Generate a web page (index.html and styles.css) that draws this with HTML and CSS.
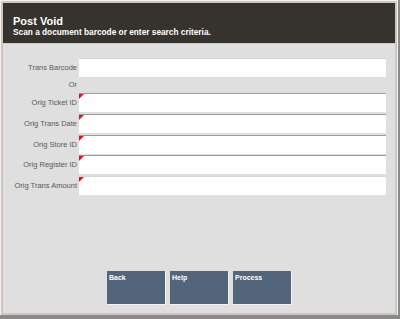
FILE: index.html
```html
<!DOCTYPE html>
<html lang="en">
<head>
    <meta charset="UTF-8">
    <meta name="viewport" content="width=device-width, initial-scale=1.0">
    <title>Post Void</title>
    <link rel="stylesheet" href="styles.css">
</head>
<body>

    <div class="window">
        <div class="header">
            <div class="title">Post Void</div>
            <div class="subtitle">Scan a document barcode or enter search criteria.</div>
        </div>

        <div class="content">
            <form class="search-form">
                <label class="field-label" for="barcode">Trans Barcode</label>
                <input class="field" type="text" id="barcode">

                <div class="or-row">Or</div>

                <label class="field-label" for="ticket">Orig Ticket ID</label>
                <div class="field-wrap required"><input class="field dark" type="text" id="ticket"></div>

                <label class="field-label" for="tdate">Orig Trans Date</label>
                <div class="field-wrap required"><input class="field dark" type="text" id="tdate"></div>

                <label class="field-label" for="store">Orig Store ID</label>
                <div class="field-wrap required"><input class="field dark" type="text" id="store"></div>

                <label class="field-label" for="register">Orig Register ID</label>
                <div class="field-wrap required"><input class="field dark" type="text" id="register"></div>

                <label class="field-label" for="amount">Orig Trans Amount</label>
                <div class="field-wrap required"><input class="field" type="text" id="amount"></div>
            </form>

            <div class="buttons">
                <button type="button" class="btn">Back</button>
                <button type="button" class="btn">Help</button>
                <button type="button" class="btn">Process</button>
            </div>
        </div>
    </div>

</body>
</html>
```

FILE: styles.css
```css
body {
    margin: 0;
    padding: 0;
    background-color: #8a8a8a;
    font-family: "Liberation Sans", Arial, sans-serif;
}

.window {
    width: 392px;
    height: 310px;
    border: 2px solid #cdc6be;
    outline: 1px solid #f4f2ef;
    margin: 1px 0 0 1px;
    background-color: #dfdfdf;
    display: flex;
    flex-direction: column;
}

.header {
    background-color: #36322d;
    height: 41px;
    padding: 12px 0 0 10px;
    box-sizing: border-box;
    color: #fff;
    font-weight: bold;
    border-bottom: 1px solid #cfcfcf;
}

.title {
    font-size: 11px;
    line-height: 12px;
}

.subtitle {
    font-size: 8.3px;
    line-height: 11px;
}

.content {
    flex: 1;
    display: flex;
    flex-direction: column;
}

.search-form {
    display: grid;
    grid-template-columns: 74px 307px;
    column-gap: 2px;
    row-gap: 1.75px;
    align-items: center;
    margin-top: 14px;
}

.field-label {
    grid-column: 1;
    text-align: right;
    font-size: 7.5px;
    color: #595959;
    white-space: nowrap;
}

.field {
    display: block;
    width: 100%;
    height: 19px;
    box-sizing: border-box;
    border: none;
    border-top: 1px solid #d6d6d6;
    background-color: #fff;
    margin: 0;
    padding: 0 3px;
    outline: none;
}

.field.dark {
    border-top-color: #9c9c9c;
}

.field-wrap {
    position: relative;
}

.required::before {
    content: '';
    position: absolute;
    top: 1px;
    left: 0;
    border-top: 5px solid #e8101a;
    border-right: 5px solid transparent;
}

.or-row {
    grid-column: 1;
    text-align: right;
    font-size: 7.5px;
    color: #595959;
    height: 12.5px;
    line-height: 12.5px;
}

.buttons {
    display: flex;
    justify-content: center;
    gap: 4px;
    margin-top: 76px;
    padding-left: 1px;
}

.btn {
    width: 59px;
    height: 34px;
    background-color: #53657a;
    border: none;
    border-right: 1px solid #f2f2f2;
    border-bottom: 1px solid #f2f2f2;
    color: #fff;
    font-family: "Liberation Sans", Arial, sans-serif;
    font-size: 7px;
    font-weight: bold;
    text-align: left;
    padding: 3px 2px;
    display: flex;
    align-items: flex-start;
    cursor: pointer;
}
```
